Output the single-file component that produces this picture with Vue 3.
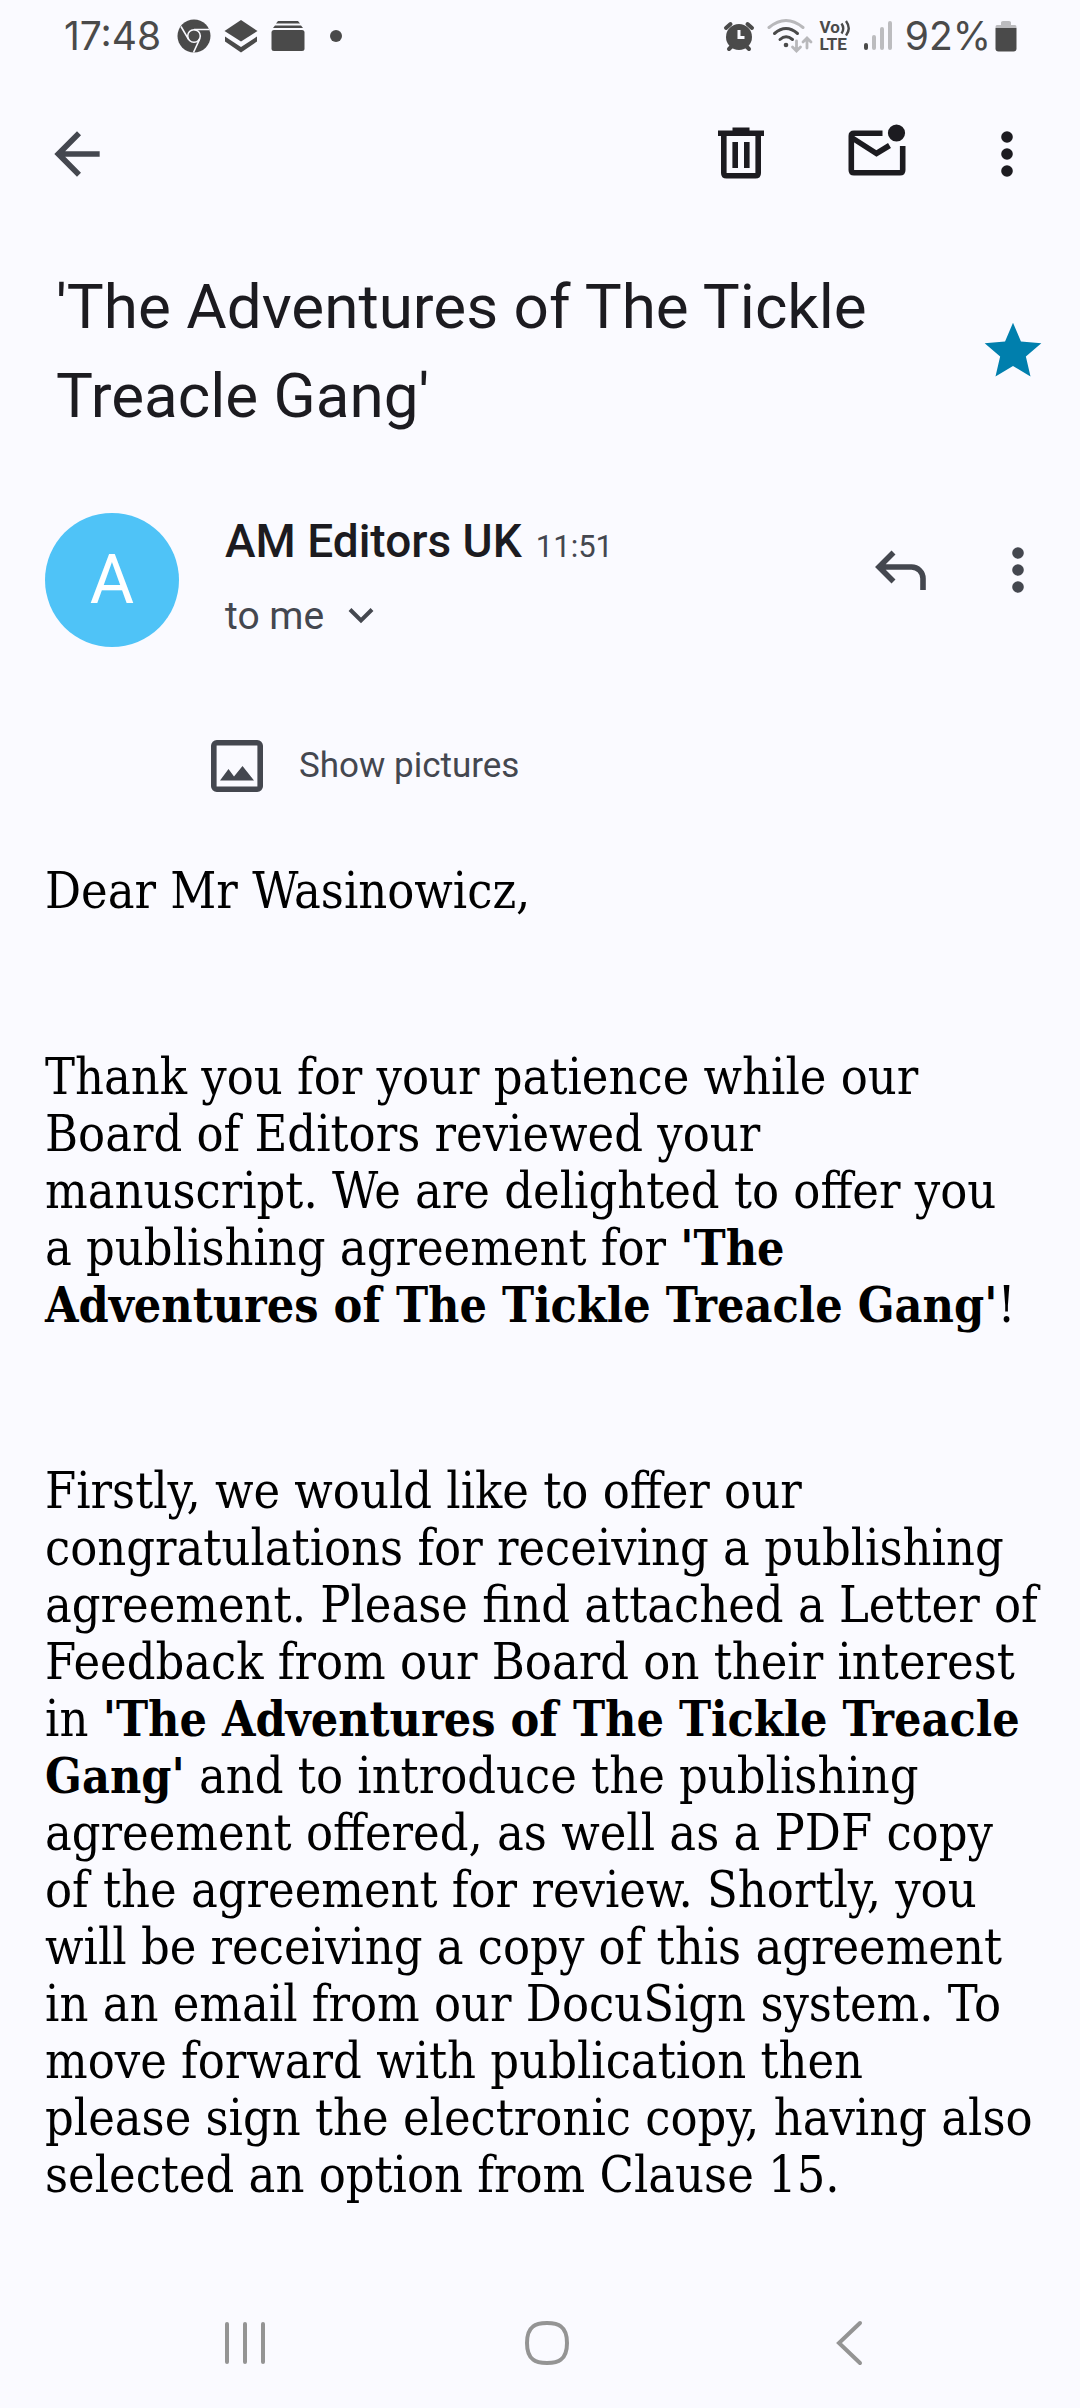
<script setup>
const title = "'The Adventures of The Tickle Treacle Gang'"
</script>

<template>
  <div class="screen">
    <div class="status">
      <div class="status-left">
        <span class="clock">17:48</span>
        <svg width="34" height="34" viewBox="0 0 34 34" aria-hidden="true">
          <circle cx="17" cy="17" r="16.5" fill="#4a4a4a" />
          <g stroke="#fafaff" stroke-width="1.6" fill="none">
            <circle cx="17" cy="17" r="6.3" />
            <path d="M17 10.5H32M11.4 20.2L4 7.5M22.6 20.2L16.5 33.5" />
          </g>
        </svg>
        <svg width="34" height="34" viewBox="0 0 34 34" fill="#4a4a4a" aria-hidden="true">
          <path d="M17 1L33.500 12L17 22.500L.5 12Z" />
          <path d="M1 17.500L17 28L33 17.500V22.500L17 33.500L1 22.500Z" />
        </svg>
        <svg width="34" height="34" viewBox="0 0 34 34" fill="#4a4a4a" aria-hidden="true">
          <path d="M7 2H27L29 4.500H5ZM4 6.500H30L32 9H2Z" />
          <rect x="0.500" y="11" width="33" height="21" rx="2.500" />
        </svg>
        <span class="dot"></span>
      </div>
      <div class="status-right">
        <svg class="alarm" width="32" height="34" viewBox="0 0 32 34" aria-hidden="true">
          <circle cx="16" cy="18" r="13" fill="#4a4a4a" />
          <path d="M3 9L7.500 5M29 9L24.500 5M6 30L8.500 27.500M26 30L23.500 27.500" stroke="#4a4a4a" stroke-width="4" stroke-linecap="round" />
          <path d="M16 11V18.500H21.500" fill="none" stroke="#fafaff" stroke-width="3" />
        </svg>
        <svg width="46" height="36" viewBox="0 0 46 36" fill="none" stroke-linecap="round" aria-hidden="true">
          <path d="M2 9.500Q19 -4.500 36 9.500" stroke="#b8b8bb" stroke-width="3" />
          <path d="M7.500 15.500Q19 5.500 30.500 15.500M13 21.500Q19 16 25.500 21.500" stroke="#4a4a4a" stroke-width="3" />
          <circle cx="19" cy="27" r="2.300" fill="#4a4a4a" />
          <path d="M29.500 23V32M25.500 29L29.500 33L33.500 29M40 30V21M36 24L40 20L44 24" stroke="#b8b8bb" stroke-width="2.800" />
        </svg>
        <span class="volte">
          <span class="vo">Vo<svg width="11" height="16" viewBox="0 0 11 16" fill="none" stroke="#4a4a4a" stroke-width="2.400" aria-hidden="true"><path d="M1.500 3.500Q5 8.500 1.500 13.500M6 1Q11.500 8.500 6 15.500" /></svg></span>
          <span>LTE</span>
        </span>
        <svg class="signal" width="28" height="32" viewBox="0 0 28 32" stroke-width="4" stroke-linecap="round" aria-hidden="true">
          <path d="M2 25V28" stroke="#4a4a4a" />
          <path d="M10 17V28M18 9V28M26 3V28" stroke="#bcbcbf" />
        </svg>
        <span class="battery-text">92%</span>
        <svg width="22" height="34" viewBox="0 0 22 34" aria-hidden="true">
          <path d="M6 3.500Q6 2 8 2H14Q16 2 16 3.500V6H20Q21.500 6 21.500 8V9H.5V8Q.5 6 2 6H6Z" fill="#bcbcbf" />
          <path d="M.5 9H21.500V29.500Q21.500 32.500 18.500 32.500H3.500Q.5 32.500 .5 29.500Z" fill="#4a4a4a" />
        </svg>
      </div>
    </div>

    <header class="toolbar">
      <button class="icon-btn muted" aria-label="Back">
        <svg width="68" height="68" viewBox="0 0 24 24" fill="currentColor"><path d="M20 11H7.830l5.590-5.590L12 4l-8 8 8 8 1.410-1.410L7.830 13H20v-2z" /></svg>
      </button>
      <div class="actions">
        <button class="icon-btn delete" aria-label="Delete">
          <svg width="68" height="68" viewBox="0 3 68 68" fill="none" stroke="currentColor">
            <path d="M11 13.500H25.500V10.500H42.500V13.500H57V19H11Z" fill="currentColor" stroke="none" />
            <path d="M16.800 18V56Q16.800 58.800 19.500 58.800H48.500Q51.200 58.800 51.200 56V18M28.200 25V51M39.800 25V51" stroke-width="5.600" />
          </svg>
        </button>
        <button class="icon-btn" aria-label="Mark as unread">
          <svg width="68" height="68" viewBox="0 3 68 68" fill="none" stroke="currentColor" stroke-width="5.600">
            <path d="M39.500 16.300H11Q8.300 16.300 8.300 19V53Q8.300 55.800 11 55.800H57Q59.700 55.800 59.700 53V29" />
            <path d="M8.500 20.500L33.500 36.500L46.500 28.500" />
            <circle cx="53.500" cy="16" r="8.600" fill="currentColor" stroke="none" />
          </svg>
        </button>
        <button class="icon-btn" aria-label="More options">
          <svg width="68" height="68" viewBox="0 0 68 68" fill="currentColor"><circle cx="34" cy="17" r="5.800" /><circle cx="34" cy="34" r="5.800" /><circle cx="34" cy="51" r="5.800" /></svg>
        </button>
      </div>
    </header>

    <main>
      <section class="subject">
        <h1>{{ title }}</h1>
        <button class="icon-btn star" aria-label="Starred">
          <svg width="68" height="68" viewBox="0 0 24 24" fill="currentColor"><path d="M12 17.270L18.180 21l-1.640-7.030L22 9.240l-7.190-.61L12 2 9.190 8.630 2 9.240l5.460 4.730L5.820 21z" /></svg>
        </button>
      </section>

      <section class="sender">
        <div class="avatar">A</div>
        <div class="who">
          <div class="from"><span class="name">AM Editors UK</span><time>11:51</time></div>
          <button class="to">to me
            <svg width="26" height="18" viewBox="0 0 26 18" fill="none" stroke="currentColor" stroke-width="4" aria-hidden="true"><path d="M2 2.500L13 13.500L24 2.500" /></svg>
          </button>
        </div>
        <div class="sender-actions">
          <button class="icon-btn muted" aria-label="Reply">
            <svg width="68" height="68" viewBox="0 0 68 68" fill="none" stroke="currentColor" stroke-width="5.600"><path d="M27.500 16.500L13 31L27.500 45.500M13 31H45.500A11.500 11.500 0 0 1 57 42.500V54" /></svg>
          </button>
          <button class="icon-btn muted" aria-label="More message options">
            <svg width="68" height="68" viewBox="0 0 68 68" fill="currentColor"><circle cx="34" cy="17" r="5.800" /><circle cx="34" cy="34" r="5.800" /><circle cx="34" cy="51" r="5.800" /></svg>
          </button>
        </div>
      </section>

      <button class="pictures">
        <svg width="52" height="52" viewBox="0 0 52 52" aria-hidden="true">
          <rect x="2.800" y="2.800" width="46.400" height="46.400" rx="3" fill="none" stroke="currentColor" stroke-width="5.600" />
          <path d="M9 40.500L17.500 29L23 36.500L31.500 26L43 40.500Z" fill="currentColor" />
        </svg>
        Show pictures
      </button>

      <article class="body">
        <p>Dear Mr Wasinowicz,</p>
        <p>
          Thank you for your patience while our<br />
          Board of Editors reviewed your<br />
          manuscript. We are delighted to offer you<br />
          a publishing agreement for <b>'The<br />
          Adventures of The Tickle Treacle Gang'</b>!
        </p>
        <p>
          Firstly, we would like to offer our<br />
          congratulations for receiving a publishing<br />
          agreement. Please find attached a Letter of<br />
          Feedback from our Board on their interest<br />
          in <b>'The Adventures of The Tickle Treacle<br />
          Gang'</b> and to introduce the publishing<br />
          agreement offered, as well as a PDF copy<br />
          of the agreement for review. Shortly, you<br />
          will be receiving a copy of this agreement<br />
          in an email from our DocuSign system. To<br />
          move forward with publication then<br />
          please sign the electronic copy, having also<br />
          selected an option from Clause 15.
        </p>
      </article>
    </main>

    <nav class="nav">
      <button class="icon-btn" aria-label="Recent apps">
        <svg width="48" height="48" viewBox="0 0 48 48" fill="none" stroke="currentColor" stroke-width="4" stroke-linecap="round"><path d="M6 5V43M24 5V43M42 5V43" /></svg>
      </button>
      <button class="icon-btn" aria-label="Home">
        <svg width="48" height="48" viewBox="0 0 48 48" fill="none" stroke="currentColor" stroke-width="4"><path d="M24 4Q34 4 38 7.500Q44 12 44 24Q44 36 38 40.500Q34 44 24 44Q14 44 10 40.500Q4 36 4 24Q4 12 10 7.500Q14 4 24 4Z" /></svg>
      </button>
      <button class="icon-btn" aria-label="Navigate back">
        <svg width="48" height="48" viewBox="0 0 48 48" fill="none" stroke="currentColor" stroke-width="4" stroke-linecap="round"><path d="M34 4L13 24L34 44" /></svg>
      </button>
    </nav>
  </div>
</template>

<style>
body {
  margin: 0;
  background: #fafaff;
}
</style>

<style scoped>
.screen {
  display: flex;
  flex-direction: column;
  min-height: 100vh;
  background: #fafaff;
  color: #1c1b20;
  font-family: Roboto, "Liberation Sans", sans-serif;
}
svg {
  display: block;
  flex: none;
}
button {
  margin: 0;
  padding: 0;
  border: 0;
  background: none;
  color: inherit;
  font: inherit;
}
.status {
  display: flex;
  align-items: center;
  justify-content: space-between;
  height: 72px;
  padding: 0 63px 0 64px;
  color: #4a4a4a;
}
.status-left,
.status-right {
  display: flex;
  align-items: center;
}
.status-left {
  gap: 13px;
}
.status-right {
  gap: 4px;
}
.clock,
.battery-text {
  font-family: Inter, sans-serif;
  font-size: 39px;
  line-height: 72px;
}
.clock {
  margin-right: 3px;
}
.alarm {
  margin-right: 8px;
}
.signal {
  margin: 0 9px;
}
.dot {
  width: 12px;
  height: 12px;
  margin-left: 12px;
  border-radius: 50%;
  background: #4a4a4a;
}
.volte {
  display: flex;
  flex-direction: column;
  margin-left: 2px;
  font-size: 17px;
  font-weight: 700;
  line-height: 17px;
}
.vo {
  display: flex;
  align-items: center;
}
.toolbar {
  display: flex;
  align-items: center;
  justify-content: space-between;
  height: 164px;
  padding: 0 39px 0 43px;
}
.actions {
  display: flex;
  gap: 62px;
}
.delete {
  margin-right: 6px;
}
.icon-btn {
  display: flex;
}
.muted {
  color: #44474f;
}
.subject {
  display: flex;
  align-items: center;
  justify-content: space-between;
  padding: 26px 33px 0 56px;
}
h1 {
  max-width: 860px;
  margin: 0;
  font-size: 62px;
  font-weight: 400;
  line-height: 89px;
}
.star {
  color: #007fad;
}
.sender {
  display: flex;
  align-items: flex-start;
  padding: 73px 28px 0 45px;
}
.avatar {
  width: 134px;
  height: 134px;
  border-radius: 50%;
  background: #4fc3f7;
  color: #fff;
  font-size: 68px;
  line-height: 134px;
  text-align: center;
}
.who {
  flex: 1;
  margin-left: 46px;
}
.from {
  display: flex;
  align-items: baseline;
  gap: 14px;
  line-height: 56px;
}
.name {
  font-size: 46px;
  font-weight: 500;
}
time {
  color: #44474f;
  font-size: 31px;
}
.to {
  display: flex;
  align-items: center;
  gap: 24px;
  margin-top: 13px;
  color: #44474f;
  font-size: 39px;
  line-height: 56px;
}
.sender-actions {
  display: flex;
  gap: 50px;
  padding-top: 23px;
}
.pictures {
  display: flex;
  align-items: center;
  gap: 36px;
  margin: 92px 0 0 211px;
  color: #44474f;
  font-size: 35px;
  line-height: 54px;
}
.body {
  padding: 70px 45px;
  color: #000;
  font-family: "DejaVu Serif Condensed", "DejaVu Serif", serif;
  font-size: 50px;
  line-height: 57px;
  white-space: nowrap;
}
b {
  font-size: 48px;
  line-height: 1;
}
p {
  margin: 0 0 129px;
}
p:last-child {
  margin: 0;
}
.nav {
  display: grid;
  grid-template-columns: repeat(3, 1fr);
  justify-items: center;
  align-items: center;
  height: 130px;
  margin-top: auto;
  padding: 0 79px 0 94px;
  color: #949494;
}
</style>
